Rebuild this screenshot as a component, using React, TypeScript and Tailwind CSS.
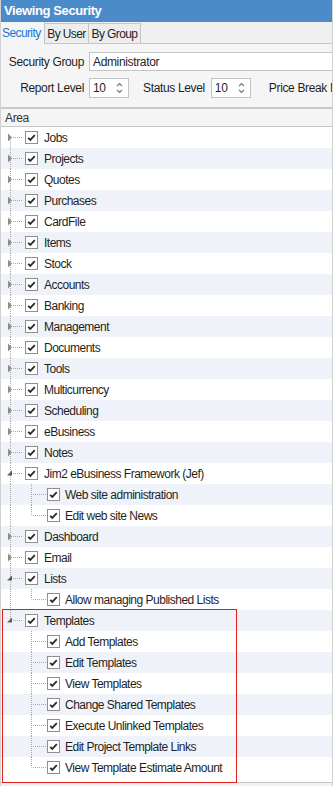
import React from "react"

type Node = { label: string; expanded?: boolean; children?: string[] }

const tree: Node[] = [
  { label: "Jobs" },
  { label: "Projects" },
  { label: "Quotes" },
  { label: "Purchases" },
  { label: "CardFile" },
  { label: "Items" },
  { label: "Stock" },
  { label: "Accounts" },
  { label: "Banking" },
  { label: "Management" },
  { label: "Documents" },
  { label: "Tools" },
  { label: "Multicurrency" },
  { label: "Scheduling" },
  { label: "eBusiness" },
  { label: "Notes" },
  { label: "Jim2 eBusiness Framework (Jef)", expanded: true, children: ["Web site administration", "Edit web site News"] },
  { label: "Dashboard" },
  { label: "Email" },
  { label: "Lists", expanded: true, children: ["Allow managing Published Lists"] },
  {
    label: "Templates",
    expanded: true,
    children: [
      "Add Templates",
      "Edit Templates",
      "View Templates",
      "Change Shared Templates",
      "Execute Unlinked Templates",
      "Edit Project Template Links",
      "View Template Estimate Amount",
    ],
  },
]

function Check() {
  return (
    <div className="w-[13px] h-[13px] shrink-0 border border-[#8e8e8e] bg-white flex items-center justify-center">
      <svg width="11" height="11" viewBox="0 0 11 11">
        <path d="M2.2 5.8 L4.3 7.9 L8.8 3.2" fill="none" stroke="#2a2a2a" strokeWidth="1.8" />
      </svg>
    </div>
  )
}

function RootLines({ pos, expanded, root }: { pos: "first" | "mid" | "last"; expanded?: boolean; root: boolean }) {
  const y1 = pos === "first" && root ? 10.5 : 0
  const y2 = pos === "last" && root ? 10.5 : 21
  return (
    <svg width="24" height="21" className="shrink-0">
      {(root || pos !== "last") && (
        <line x1="9.5" y1={y1} x2="9.5" y2={y2} stroke="#a8a8a8" strokeDasharray="1 1" />
      )}
      {root && <line x1="12" y1="10.5" x2="22" y2="10.5" stroke="#a8a8a8" strokeDasharray="1 1" />}
      {root &&
        (expanded ? (
          <polygon points="11,7.5 11,12.5 6,12.5" fill="#5c5c5c" />
        ) : (
          <polygon points="7,6.5 11,10.5 7,14.5" fill="#8c8c8c" />
        ))}
    </svg>
  )
}

function ChildLines({ last }: { last: boolean }) {
  return (
    <svg width="22" height="21" className="shrink-0">
      <line x1="6.5" y1="0" x2="6.5" y2={last ? 10.5 : 21} stroke="#a8a8a8" strokeDasharray="1 1" />
      <line x1="8" y1="10.5" x2="21" y2="10.5" stroke="#a8a8a8" strokeDasharray="1 1" />
    </svg>
  )
}

function Spin({ value }: { value: string }) {
  return (
    <div className="w-[40px] h-[20px] shrink-0 border border-[#c4c4c4] bg-white flex items-center pl-[3px] pr-[5px]">
      <span className="flex-1">{value}</span>
      <svg width="7" height="14" viewBox="0 0 7 14">
        <path d="M1 5 L3.5 2.5 L6 5" fill="none" stroke="#7a7a7a" strokeWidth="1.2" />
        <path d="M1 9 L3.5 11.5 L6 9" fill="none" stroke="#7a7a7a" strokeWidth="1.2" />
      </svg>
    </div>
  )
}

export default function App() {
  const rows: React.ReactNode[] = []
  let i = 0
  tree.forEach((n, ri) => {
    const pos = ri === 0 ? "first" : ri === tree.length - 1 ? "last" : "mid"
    rows.push(
      <div key={"r" + ri} className={`flex items-center h-[21px] ${i % 2 ? "bg-[#eff3f9]" : "bg-white"}`}>
        <RootLines pos={pos} expanded={n.expanded} root />
        <Check />
        <span className="ml-[6px] whitespace-nowrap">{n.label}</span>
      </div>
    )
    i++
    n.children?.forEach((c, ci) => {
      rows.push(
        <div key={"c" + ri + "-" + ci} className={`flex items-center h-[21px] ${i % 2 ? "bg-[#eff3f9]" : "bg-white"}`}>
          <RootLines pos={pos} root={false} />
          <ChildLines last={ci === n.children!.length - 1} />
          <Check />
          <span className="ml-[5px] whitespace-nowrap">{c}</span>
        </div>
      )
      i++
    })
  })

  return (
    <div className="w-[333px] h-[786px] overflow-hidden flex flex-col bg-[#f0f0f0] border-x border-[#d2d2d2] text-[12px] tracking-[-0.35px] text-[#1f1f1f] font-['Liberation_Sans',Arial,sans-serif]">
      <div className="h-[22px] shrink-0 bg-[#4b8bca] text-white font-bold text-[13px] tracking-[-0.4px] flex items-center pl-[3px]">
        Viewing Security
      </div>

      <div className="h-[22px] shrink-0 flex items-end border-b border-[#c6c6c6] bg-[#f0f0f0] whitespace-nowrap tracking-[-0.6px]">
        <div className="h-[22px] w-[44px] shrink-0 -mb-px bg-[#f5f5f5] border-r border-[#c6c6c6] text-[#1a76cf] flex items-center pl-[1px]">
          Security
        </div>
        <div className="h-[20px] w-[44px] shrink-0 border-t border-r border-[#c6c6c6] bg-[#ededed] flex items-center justify-center">
          By User
        </div>
        <div className="h-[20px] w-[52px] shrink-0 border-t border-r border-[#c6c6c6] bg-[#ededed] flex items-center justify-center">
          By Group
        </div>
      </div>

      <div className="h-[63px] shrink-0 bg-[#f5f5f5] flex flex-col pt-[8px] gap-[7px] overflow-hidden">
        <div className="flex items-center">
          <span className="w-[83px] shrink-0 text-right whitespace-nowrap">Security Group</span>
          <div className="ml-[5px] flex-1 h-[19px] border border-r-0 border-[#c4c4c4] bg-white flex items-center pl-[3px]">
            Administrator
          </div>
        </div>
        <div className="flex items-center whitespace-nowrap">
          <span className="w-[83px] shrink-0 text-right">Report Level</span>
          <div className="ml-[5px]">
            <Spin value="10" />
          </div>
          <span className="ml-[14px] shrink-0">Status Level</span>
          <div className="ml-[6px]">
            <Spin value="10" />
          </div>
          <span className="ml-[18px] shrink-0">Price Break M</span>
        </div>
      </div>

      <div className="h-[2px] shrink-0 bg-[#c9c9c9]" />

      <div className="h-[18px] shrink-0 bg-[#f5f5f5] border-b border-[#c8c8c8] flex items-center pl-[4px] text-[#333]">
        Area
      </div>

      <div className="relative h-[656px] shrink-0 bg-white border-b border-[#c8c8c8] tracking-[-0.5px]">
        {rows}
        <div className="absolute left-[1px] top-[482px] w-[235px] h-[174px] border border-[#e0201f]" />
      </div>
    </div>
  )
}
